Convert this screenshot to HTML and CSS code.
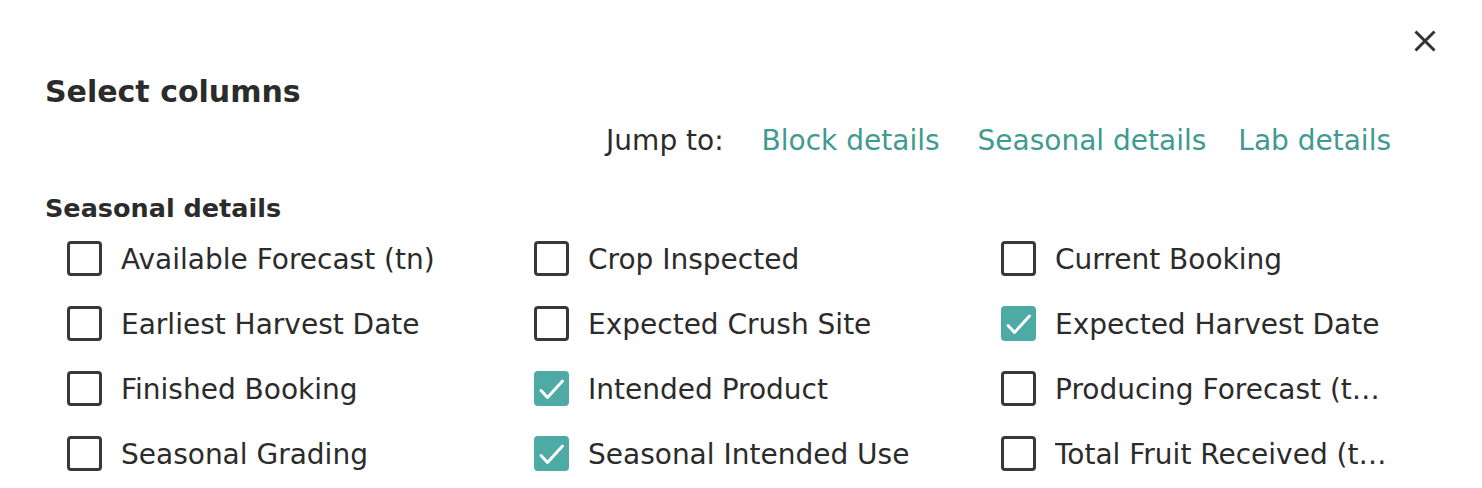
FILE: index.html
```html
<!DOCTYPE html>
<html lang="en">
<head>
    <title>Select columns</title>
    <link rel="stylesheet" href="styles.css">
</head>
<body>
    <div class="modal">
        <div class="modal-top">
            <button class="close-btn" type="button" aria-label="Close">
                <svg width="22" height="22" viewBox="0 0 22 22">
                    <path d="M1.5 1.5 L20.5 20.5 M20.5 1.5 L1.5 20.5" stroke="#333" stroke-width="3" fill="none"/>
                </svg>
            </button>
        </div>

        <h2 class="modal-title">Select columns</h2>

        <div class="jump-bar">
            <span class="jump-label">Jump to:</span>
            <a href="#block" class="first-link">Block details</a>
            <a href="#seasonal">Seasonal details</a>
            <a href="#lab">Lab details</a>
        </div>

        <section class="group" id="seasonal">
            <h3 class="group-title">Seasonal details</h3>
            <ul class="column-list">
                <li><span class="box"></span><span class="label">Available Forecast (tn)</span></li>
                <li><span class="box"></span><span class="label">Crop Inspected</span></li>
                <li><span class="box"></span><span class="label">Current Booking</span></li>
                <li><span class="box"></span><span class="label">Earliest Harvest Date</span></li>
                <li><span class="box"></span><span class="label">Expected Crush Site</span></li>
                <li><span class="box checked"><svg viewBox="0 0 35 35"><path d="M7 19.5 L13.5 26.5 L28.5 10" /></svg></span><span class="label">Expected Harvest Date</span></li>
                <li><span class="box"></span><span class="label">Finished Booking</span></li>
                <li><span class="box checked"><svg viewBox="0 0 35 35"><path d="M7 19.5 L13.5 26.5 L28.5 10" /></svg></span><span class="label">Intended Product</span></li>
                <li><span class="box"></span><span class="label" title="Producing Forecast (tn)">Producing Forecast (t…</span></li>
                <li><span class="box"></span><span class="label">Seasonal Grading</span></li>
                <li><span class="box checked"><svg viewBox="0 0 35 35"><path d="M7 19.5 L13.5 26.5 L28.5 10" /></svg></span><span class="label">Seasonal Intended Use</span></li>
                <li><span class="box"></span><span class="label" title="Total Fruit Received (tn)">Total Fruit Received (t…</span></li>
            </ul>
        </section>
    </div>
</body>
</html>
```

FILE: styles.css
```css
/* Column picker modal */
body {
    margin: 0;
    background-color: white;
    font-family: "DejaVu Sans", "Liberation Sans", sans-serif;
    color: #2b2b2b;
    overflow: hidden;
}

.modal {
    padding: 30px 46px 0 46px;
}

.modal-top {
    display: flex;
    justify-content: flex-end;
}

.close-btn {
    width: 22px;
    height: 22px;
    padding: 0;
    border: none;
    background: none;
    cursor: pointer;
}

.close-btn svg {
    display: block;
}

.modal-title {
    margin: 22px 0 0 -1px;
    font-size: 30px;
    line-height: 36px;
    font-weight: bold;
}

.jump-bar {
    display: flex;
    justify-content: flex-end;
    gap: 32px;
    margin: 14px 45px 0 0;
    font-size: 28px;
    line-height: 34px;
}

.jump-label {
    margin-right: 6px;
}

.jump-bar a {
    color: #3f9a91;
    text-decoration: none;
}

.jump-bar .first-link {
    margin-right: 6px;
}

.group-title {
    margin: 33px 0 0 -1px;
    font-size: 25.5px;
    line-height: 34px;
    font-weight: bold;
}

.column-list {
    list-style: none;
    margin: 16px 45px 0 21px;
    padding: 0;
    display: grid;
    grid-template-columns: repeat(3, 1fr);
    column-gap: 77px;
    row-gap: 30px;
}

.column-list li {
    display: flex;
    align-items: center;
    gap: 19px;
    min-width: 0;
    height: 35px;
}

.box {
    flex: none;
    box-sizing: border-box;
    width: 35px;
    height: 35px;
    border: 3px solid #383838;
    border-radius: 4px;
}

.box.checked {
    border-color: #4eaaa5;
    background-color: #4eaaa5;
}

.box svg {
    display: block;
    width: 35px;
    height: 35px;
    margin: -3px;
}

.box svg path {
    fill: none;
    stroke: white;
    stroke-width: 3;
    stroke-linecap: round;
    stroke-linejoin: round;
}

.label {
    font-size: 28px;
    line-height: 35px;
    padding-top: 2px;
    white-space: nowrap;
    overflow: hidden;
    text-overflow: ellipsis;
}
```
